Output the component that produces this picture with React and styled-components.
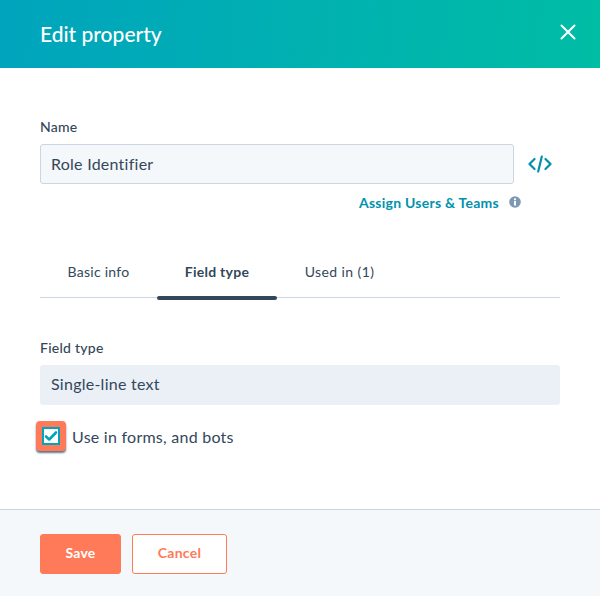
import React from 'react'
import styled, { createGlobalStyle } from 'styled-components'

const GlobalStyle = createGlobalStyle`
    html, body {
        margin: 0;
        padding: 0;
        background: #fff;
    }
    body {
        font-family: Lato, "Open Sans", sans-serif;
        letter-spacing: 0.25px;
        color: #33475b;
    }
`

const Modal = styled.div`
    width: 600px;
    height: 596px;
    display: flex;
    flex-direction: column;
    overflow: hidden;
`

const Header = styled.header`
    height: 68px;
    flex: none;
    display: flex;
    align-items: center;
    justify-content: space-between;
    padding: 0 22px 0 40px;
    background: linear-gradient(95deg, #00a4bd, #00bda5);
`

const Title = styled.h1`
    margin: 0 0 2px;
    font-size: 21px;
    font-weight: 500;
    letter-spacing: 0;
    color: #fff;
`

const CloseButton = styled.button`
    display: flex;
    padding: 0;
    border: 0;
    background: none;
    margin-top: -4px;
`

const Body = styled.main`
    flex: 1;
    padding: 50px 40px 0;
`

const Label = styled.label`
    display: block;
    font-size: 14px;
    line-height: 18px;
    font-weight: 500;
    margin-bottom: 8px;
`

const NameRow = styled.div`
    display: flex;
    align-items: center;
    gap: 14px;
`

const Input = styled.div`
    box-sizing: border-box;
    height: 40px;
    flex: 1;
    display: flex;
    align-items: center;
    padding: ${p => p.$readOnly ? '0 11px 3px' : '0 10px 2px'};
    font-size: 16px;
    border-radius: 3px;
    background: ${p => p.$readOnly ? '#eaf0f6' : '#f5f8fa'};
    border: ${p => p.$readOnly ? '0' : '1px solid #cbd6e2'};
`

const CodeIcon = styled.svg`
    width: 24px;
    height: 24px;
    margin-right: 8px;
`

const AssignRow = styled.div`
    display: flex;
    align-items: center;
    justify-content: flex-end;
    gap: 10px;
    margin: 9px 39px 0 0;
    height: 18px;
`

const Link = styled.a`
    font-size: 14px;
    font-weight: 700;
    color: #0091ae;
`

const Tabs = styled.nav`
    display: flex;
    margin-top: 44px;
    height: 42px;
    border-bottom: 1px solid #cbd6e2;
`

const Tab = styled.div`
    position: relative;
    box-sizing: border-box;
    width: ${p => p.$width}px;
    text-align: center;
    padding-top: 8px;
    font-size: 14px;
    line-height: 18px;
    font-weight: ${p => p.$active ? 700 : 400};
    letter-spacing: ${p => p.$wide ? '0.4px' : '0.25px'};

    ${p => p.$active && `
        &::after {
            content: '';
            position: absolute;
            left: 0;
            right: 0;
            bottom: -3px;
            height: 4px;
            border-radius: 2px;
            background: #33475b;
        }
    `}
`

const FieldSection = styled.section`
    margin-top: 41px;
`

const CheckRow = styled.div`
    display: flex;
    align-items: center;
    gap: 6px;
    margin-top: 16px;
`

const CheckHighlight = styled.span`
    width: 24px;
    height: 24px;
    margin-left: -4px;
    display: flex;
    align-items: center;
    justify-content: center;
    border: 3px solid #ff7a59;
    border-radius: 4px;
    background: #ff7a59;
    box-shadow: 0 2px 2px rgba(51, 71, 91, 0.75);
`

const CheckBox = styled.span`
    box-sizing: border-box;
    width: 18px;
    height: 18px;
    display: flex;
    align-items: center;
    justify-content: center;
    background: #fff;
    border: 2px solid #00a4bd;
`

const CheckLabel = styled.span`
    font-size: 16px;
`

const Footer = styled.footer`
    box-sizing: border-box;
    height: 87px;
    flex: none;
    display: flex;
    align-items: flex-start;
    gap: 11px;
    padding: 24px 40px 0;
    background: #f5f8fa;
    border-top: 1px solid #cbd6e2;
`

const Button = styled.button`
    box-sizing: border-box;
    width: ${p => p.$width}px;
    height: 40px;
    padding: 0 0 3px;
    border-radius: 3px;
    border: 1px solid #ff7a59;
    font-family: inherit;
    font-size: 14px;
    font-weight: 700;
    letter-spacing: 0.25px;
    background: ${p => p.$primary ? '#ff7a59' : '#fff'};
    color: ${p => p.$primary ? '#fff' : '#ff7a59'};
`

export default function App() {
    return (
        <Modal>
            <GlobalStyle />
            <Header>
                <Title>Edit property</Title>
                <CloseButton aria-label="Close">
                    <svg width="20" height="20" viewBox="0 0 20 20" fill="none" stroke="#fff" strokeWidth="2" strokeLinecap="round">
                        <path d="M3.5 3.5l13 13M16.5 3.5l-13 13" />
                    </svg>
                </CloseButton>
            </Header>
            <Body>
                <Label>Name</Label>
                <NameRow>
                    <Input>Role Identifier</Input>
                    <CodeIcon viewBox="0 0 24 24" fill="none" stroke="#0091ae" strokeWidth="2.2" strokeLinecap="round" strokeLinejoin="round">
                        <path d="M6.5 7L1.5 12l5 5M17.5 7l5 5-5 5M13.8 4.5l-3.6 15" />
                    </CodeIcon>
                </NameRow>
                <AssignRow>
                    <Link>Assign Users &amp; Teams</Link>
                    <svg width="12" height="12" viewBox="0 0 12 12">
                        <circle cx="6" cy="6" r="5.8" fill="#7c98b6" />
                        <rect x="5" y="5" width="2" height="4.5" fill="#fff" />
                        <rect x="5" y="2.4" width="2" height="1.8" fill="#fff" />
                    </svg>
                </AssignRow>
                <Tabs>
                    <Tab $width={117}>Basic info</Tab>
                    <Tab $width={120} $active>Field type</Tab>
                    <Tab $width={125} $wide>Used in (1)</Tab>
                </Tabs>
                <FieldSection>
                    <Label>Field type</Label>
                    <Input $readOnly>Single-line text</Input>
                </FieldSection>
                <CheckRow>
                    <CheckHighlight>
                        <CheckBox>
                            <svg width="14" height="12" viewBox="0 0 14 12" fill="none" stroke="#00a4bd" strokeWidth="2.6" strokeLinecap="round" strokeLinejoin="round">
                                <path d="M2 6.5l3.2 3L12 2.5" />
                            </svg>
                        </CheckBox>
                    </CheckHighlight>
                    <CheckLabel>Use in forms, and bots</CheckLabel>
                </CheckRow>
            </Body>
            <Footer>
                <Button $primary $width={81}>Save</Button>
                <Button $width={95}>Cancel</Button>
            </Footer>
        </Modal>
    )
}
